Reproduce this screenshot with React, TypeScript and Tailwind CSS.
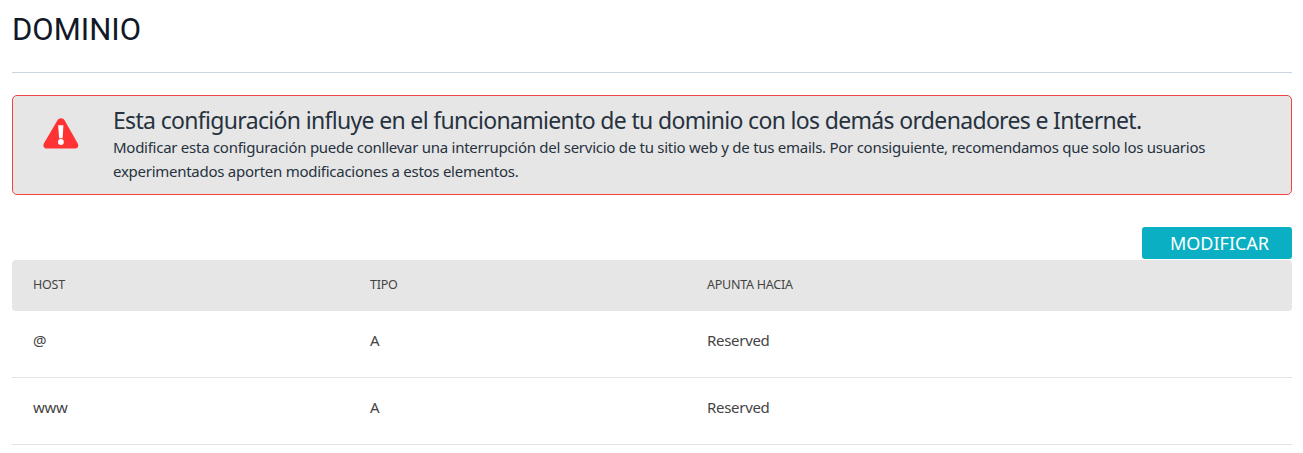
interface DnsRecord {
  host: string
  type: string
  target: string
}

const records: DnsRecord[] = [
  { host: '@', type: 'A', target: 'Reserved' },
  { host: 'www', type: 'A', target: 'Reserved' },
]

const WarningIcon = () => (
  <svg width="36" height="31" viewBox="0 0 36 31" className="shrink-0" aria-hidden="true">
    <path
      d="M14.3 2.4C16 -.4 20 -.4 21.7 2.4L34.6 25.3C36.1 28 34.8 30.5 32 30.5H4C1 30.5 -.5 28 1 25.3Z"
      fill="#ff3333"
    />
    <path d="M15.2 7.2H20.4L19.6 20.2H16.1Z" fill="#fff" />
    <circle cx="17.9" cy="24" r="2.9" fill="#fff" />
  </svg>
)

const WarningBox = () => (
  <div className="mt-[22px] flex h-[100px] rounded-[5px] border border-[#f04444] bg-[#e6e6e6] pl-[30px] text-[#26323e]">
    <div className="w-[70px] shrink-0 pt-[22px]">
      <WarningIcon />
    </div>
    <div className="pt-[10px]">
      <h2 className="text-[23px] leading-[29px] tracking-[-0.67px] whitespace-nowrap">
        Esta configuración influye en el funcionamiento de tu dominio con los demás ordenadores e Internet.
      </h2>
      <p className="text-[15px] leading-6 tracking-[-0.265px] whitespace-nowrap">
        Modificar esta configuración puede conllevar una interrupción del servicio de tu sitio web y de tus emails. Por
        consiguiente, recomendamos que solo los usuarios
        <br />
        experimentados aporten modificaciones a estos elementos.
      </p>
    </div>
  </div>
)

const RecordsTable = ({ rows }: { rows: DnsRecord[] }) => (
  <div className="mt-px text-[#444]">
    <div className="grid h-[51px] grid-cols-[337px_337px_1fr] items-center rounded bg-[#e6e6e6] pl-[21px] text-[12.5px] tracking-[-0.25px]">
      <span>HOST</span>
      <span>TIPO</span>
      <span>APUNTA HACIA</span>
    </div>
    {rows.map((row) => (
      <div
        key={row.host}
        className="grid h-[67px] grid-cols-[337px_337px_1fr] items-center border-b border-[#e4e4e4] pb-2 pl-[21px] text-[15px] tracking-[-0.3px]"
      >
        <span>{row.host}</span>
        <span>{row.type}</span>
        <span>{row.target}</span>
      </div>
    ))}
  </div>
)

export default function App() {
  return (
    <div className="h-[453px] overflow-hidden bg-white pr-[11px] pl-3 font-['Noto_Sans',sans-serif]">
      <h1 className="h-[73px] border-b border-[#cbd5e1] pt-[10px] font-['Roboto',sans-serif] text-[31px] leading-10 text-[#111827]">
        DOMINIO
      </h1>
      <WarningBox />
      <div className="mt-8 flex justify-end">
        <button
          type="button"
          className="h-8 w-[150px] rounded-[3px] bg-[#0bafc3] pl-[5px] text-lg text-white"
        >
          MODIFICAR
        </button>
      </div>
      <RecordsTable rows={records} />
    </div>
  )
}
